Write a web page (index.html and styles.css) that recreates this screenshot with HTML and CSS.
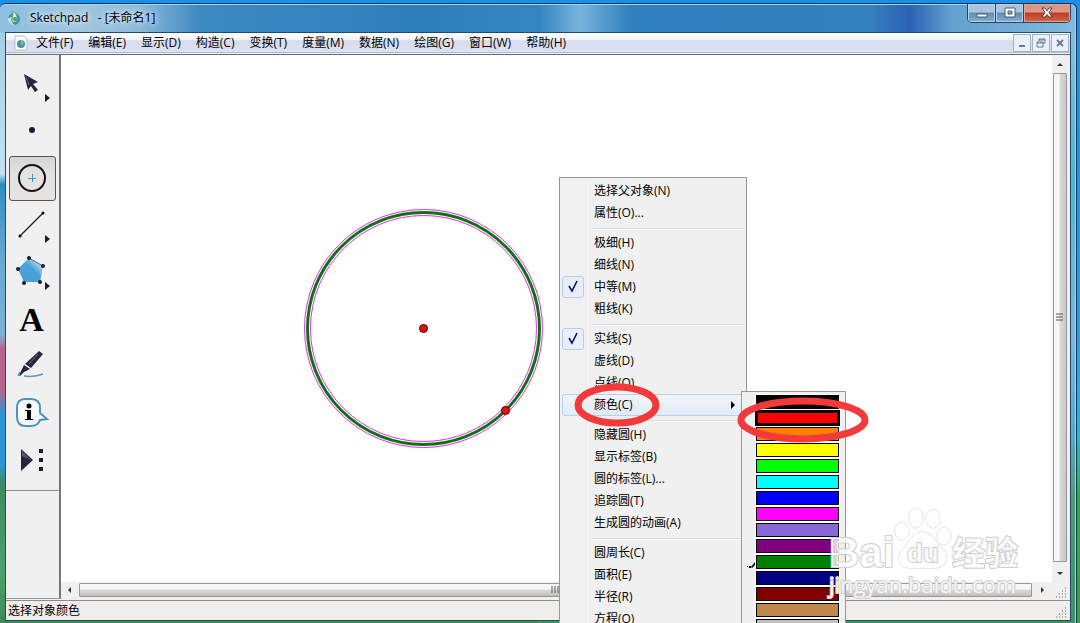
FILE: index.html
```html
<!DOCTYPE html>
<html lang="zh-CN">
<head>
  <meta charset="UTF-8">
  <title>Sketchpad - [未命名1]</title>
  <link rel="stylesheet" href="styles.css">
</head>
<body>
  <div class="window">
    <header class="titlebar">
      <svg class="app-icon" width="16" height="16" viewBox="0 0 16 16">
        <circle cx="8" cy="9" r="6" fill="#3d93b5"/>
        <path d="M2 8a6 6 0 0 0 7 7c-3-1-4-4-3-8z" fill="#b9dfe2"/>
        <path d="M6 1c4 2 6 5 5 9-1 3-5 3-5 0s2-5 0-9z" fill="#e5ecc0" stroke="#5c9a80"/>
        <circle cx="9" cy="9" r="2" fill="#4c9b6d"/>
      </svg>
      <h1>Sketchpad&nbsp;&nbsp; - [未命名1]</h1>
      <div class="win-buttons">
        <button aria-label="最小化"><svg width="12" height="12"><path d="M1 7h10v3H1z" fill="#fff" stroke="#4d5b6b"/></svg></button>
        <button aria-label="最大化"><svg width="12" height="12"><path d="M1 1h10v9H1zM4 4v3h4V4z" fill="#fff" fill-rule="evenodd" stroke="#4d5b6b"/></svg></button>
        <button class="win-close" aria-label="关闭"><svg width="12" height="12"><path d="M1 1h3l2 3 2-3h3L8 5.500l3 4.500H8L6 7.500 4 10H1l3-4.500z" fill="#fff" stroke="#5f3b3b"/></svg></button>
      </div>
    </header>

    <div class="client">
      <nav class="menubar">
        <svg class="doc-icon" width="14" height="16" viewBox="0 0 14 16">
          <path d="M1 1h9l3 3v11H1z" fill="#fff" stroke="#b9bfc9"/>
          <circle cx="7" cy="9" r="4" fill="#3d93b5"/>
          <path d="M7 4c3 2 3 4 2 6-2 1-3-1-2-6z" fill="#8abd74"/>
        </svg>
        <button>文件(F)</button>
        <button>编辑(E)</button>
        <button>显示(D)</button>
        <button>构造(C)</button>
        <button>变换(T)</button>
        <button>度量(M)</button>
        <button>数据(N)</button>
        <button>绘图(G)</button>
        <button>窗口(W)</button>
        <button>帮助(H)</button>
        <div class="mdi-buttons">
          <button aria-label="最小化文档"><svg width="10" height="10"><path d="M2 7h6v2H2z" fill="#667c91"/></svg></button>
          <button aria-label="还原文档"><svg width="10" height="10"><path d="M3 3V1h6v4H7M3 2h6M1 4h6v5H1zM1 5h6" fill="none" stroke="#667c91"/></svg></button>
          <button aria-label="关闭文档"><svg width="10" height="10"><path d="M2 2l6 6M8 2L2 8" stroke="#667c91" stroke-width="2"/></svg></button>
        </div>
      </nav>

      <div class="work">
        <aside class="toolbox">
          <button aria-label="移动箭头工具">
            <svg width="46" height="45"><path d="M15 12l14 8-5 2 5 6-3 2-4-6-3 4z" fill="#272244"/><path d="M17 15l3 8" stroke="#6d6986"/><path class="more" d="M36 32l5 4-5 4z"/></svg>
          </button>
          <button aria-label="点工具">
            <svg width="46" height="45"><circle cx="23" cy="21" r="3" fill="#1e1a38"/></svg>
          </button>
          <button class="active" aria-label="圆工具">
            <svg width="46" height="45"><circle cx="23" cy="22" r="13" fill="none" stroke="#111" stroke-width="2"/><path d="M23.500 18v8M19 22.500h8" stroke="#3f97c9"/></svg>
          </button>
          <button aria-label="线段工具">
            <svg width="46" height="45"><path d="M11 33l23-23" stroke="#222" stroke-width="1.200"/><circle cx="11" cy="33" r="1.500"/><circle cx="34" cy="10" r="1.500"/><path class="more" d="M36 32l5 4-5 4z"/></svg>
          </button>
          <button aria-label="多边形工具">
            <svg width="46" height="45">
              <linearGradient id="glass" x1="0" y1="1" x2="1" y2="0">
                <stop offset="0.55" stop-color="#48a1d8"/>
                <stop offset="0.8" stop-color="#a5d2ee"/>
              </linearGradient>
              <path d="M20 8l14 8-3 16H15L9 19z" fill="url(#glass)"/><path d="M20 8l14 8" stroke="#4f6175"/><g fill="#1e1a38"><circle cx="20" cy="8" r="2"/><circle cx="34" cy="16" r="2"/><circle cx="31" cy="32" r="2"/><circle cx="15" cy="33" r="2"/><circle cx="9" cy="19" r="2"/></g><path class="more" d="M36 32l5 4-5 4z"/>
            </svg>
          </button>
          <button class="text-tool" aria-label="文本工具">A</button>
          <button aria-label="标记工具">
            <svg width="46" height="45"><path d="M30 7l4 3-12 14-6-4z" fill="#292541"/><path d="M29 10l-9 10" stroke="#77748b"/><path d="M15 21l6 4-6 3-4 4-1-1z" fill="#292541"/><path d="M9 32l2-4M15 32c7 1 14 0 19-2" fill="none" stroke="#559eaf" stroke-width="1.500"/></svg>
          </button>
          <button aria-label="信息工具">
            <svg width="46" height="45"><path d="M16 8h6q9 0 9 9v5l7 6-7 1q-2 6-9 6h-5q-9 0-9-9v-9q0-9 8-9z" fill="#f8fbfc" stroke="#4c93bf" stroke-width="2"/><circle cx="20" cy="15" r="2.500"/><path d="M16 19h6v9h2v1h-8v-1h2v-8h-2z"/></svg>
          </button>
          <button aria-label="自定义工具">
            <svg width="46" height="45"><path d="M12 11l12 11-12 11z" fill="#27213e"/><path d="M13 13l9 9-9-4z" fill="#5b576d"/><path d="M30 11h4v4h-4zM30 20h4v4h-4zM30 29h4v4h-4z" fill="#1e1a38"/></svg>
          </button>
          <hr>
        </aside>

        <main class="sheet">
          <svg class="drawing">
            <g fill="none">
              <circle cx="362.500" cy="273.500" r="119" stroke="#dc32dc"/>
              <circle cx="362.500" cy="273.500" r="113" stroke="#dc32dc"/>
              <circle cx="362.500" cy="273.500" r="116" stroke="#107018" stroke-width="3"/>
            </g>
            <g fill="#e8100c" stroke="#400">
              <circle cx="362.500" cy="273.500" r="4"/>
              <circle cx="444.500" cy="355.500" r="4"/>
            </g>
          </svg>
        </main>

        <div class="scroll scroll-y">
          <svg width="16" height="18"><path d="M5 11l3-3 3 3z"/></svg>
          <div class="thumb"><svg width="8" height="9"><path d="M0 1h7M0 4h7M0 7h7" stroke="#555"/></svg></div>
          <svg width="16" height="20"><path d="M5 10l3 3 3-3z"/></svg>
        </div>
        <div class="scroll scroll-x">
          <svg width="18" height="16"><path d="M10 5L7 8l3 3z"/></svg>
          <div class="thumb"><svg width="9" height="8"><path d="M1 0v7M4 0v7M7 0v7" stroke="#555"/></svg></div>
          <svg width="20" height="16"><path d="M9 5l3 3-3 3z"/></svg>
        </div>
        <svg class="grip" width="12" height="12"><path d="M9 2h1M6 5h1m2 0h1M3 8h1m2 0h1m2 0h1M0 11h1m2 0h1m2 0h1m2 0h1" stroke="#aaa" stroke-width="2"/></svg>
      </div>

      <footer class="statusbar">
        <span>选择对象颜色</span>
        <svg class="grip" width="12" height="12"><path d="M9 2h1M6 5h1m2 0h1M3 8h1m2 0h1m2 0h1M0 11h1m2 0h1m2 0h1m2 0h1" stroke="#aaa" stroke-width="2"/></svg>
      </footer>
    </div>
  </div>

  <!-- right-click menu of the circle -->
  <div class="popup context-menu">
    <button>选择父对象(N)</button>
    <button>属性(O)...</button>
    <hr>
    <button>极细(H)</button>
    <button>细线(N)</button>
    <button><svg class="tick" width="22" height="22"><path d="M6 9l3 5 5-10" fill="none" stroke="#14146e" stroke-width="1.600"/></svg>中等(M)</button>
    <button>粗线(K)</button>
    <hr>
    <button><svg class="tick" width="22" height="22"><path d="M6 9l3 5 5-10" fill="none" stroke="#14146e" stroke-width="1.600"/></svg>实线(S)</button>
    <button>虚线(D)</button>
    <button>点线(O)</button>
    <button class="hover">颜色(C)<svg class="arrow" width="6" height="8"><path d="M1 0l4 4-4 4z"/></svg></button>
    <hr>
    <button>隐藏圆(H)</button>
    <button>显示标签(B)</button>
    <button>圆的标签(L)...</button>
    <button>追踪圆(T)</button>
    <button>生成圆的动画(A)</button>
    <hr>
    <button>圆周长(C)</button>
    <button>面积(E)</button>
    <button>半径(R)</button>
    <button>方程(Q)</button>
  </div>

  <div class="popup color-menu">
    <button class="black" aria-label="黑色"></button>
    <button class="red selected" aria-label="红色"></button>
    <button class="orange" aria-label="橙色"></button>
    <button class="yellow" aria-label="黄色"></button>
    <button class="lime" aria-label="绿色"></button>
    <button class="cyan" aria-label="青色"></button>
    <button class="blue" aria-label="蓝色"></button>
    <button class="magenta" aria-label="洋红"></button>
    <button class="violet" aria-label="紫罗兰"></button>
    <button class="purple" aria-label="紫色"></button>
    <button class="green" aria-label="深绿"><svg class="mark" width="9" height="6"><path d="M0 4h1v1H0zM2 4h2v2H2zM4 5l4-5v3L5 6z"/></svg></button>
    <button class="navy" aria-label="深蓝"></button>
    <button class="maroon" aria-label="深红"></button>
    <button class="tan" aria-label="棕色"></button>
    <button class="silver" aria-label="银色"></button>
  </div>

  <svg class="watermark" width="200" height="100">
    <g>
      <ellipse cx="24" cy="37" rx="7" ry="9"/>
      <ellipse cx="38" cy="24" rx="7" ry="10"/>
      <ellipse cx="55" cy="25" rx="7" ry="9"/>
      <ellipse cx="66" cy="42" rx="7" ry="9"/>
      <path d="M45 38c10 0 12 10 18 15 10 9 6 21-5 21-6 0-20 0-26 0-12 0-15-11-6-21 6-6 9-15 19-15z"/>
    </g>
    <text class="wm-logo" x="-49" y="73">Bai</text>
    <text class="wm-du" x="29" y="68">du</text>
    <text class="wm-cjk" x="74" y="71">经验</text>
    <text class="wm-url" x="-49" y="99">jingyan.baidu.com</text>
  </svg>

  <!-- red marker rings -->
  <svg class="rings">
    <ellipse cx="617" cy="405" rx="39" ry="18"/>
    <ellipse cx="803" cy="420" rx="62" ry="19"/>
  </svg>
</body>
</html>
```
FILE: styles.css
```css
* {
  box-sizing: border-box;
}
body {
  margin: 0;
  height: 100vh;
  overflow: hidden;
  position: relative;
  display: flex;
  flex-direction: column;
  padding: 3px 3px 0 0;
  font: 12px/16px "Open Sans", "Noto Sans CJK SC", sans-serif;
  color: #000;
  background: linear-gradient(#1b8fe6 0%, #2a9be8 50%, #2db6cf 70%, #2fae38 80%, #35a53c 100%);
}
button {
  font: inherit;
  color: inherit;
  border: 0;
  padding: 0;
  background: none;
}
svg {
  display: block;
  flex: none;
}

/* window frame */
.window {
  flex: 1;
  min-height: 0;
  display: flex;
  flex-direction: column;
  padding: 0 5px 2px;
  border: 1px solid #12385e;
  border-width: 1px 1px 0 0;
  border-radius: 6px 6px 0 0;
  box-shadow: inset 0 1px #a9d4ee, inset -1px 0 #a5d5ea;
  background:
    linear-gradient(90deg, #8dbfe0 0, #a0c6df 80px, #8cb9d9 140px, #3e88c0 200px, #2f7fbd 420px, #3585c3 540px, #77b4dc 580px, #3180bf 630px, #3580bf 870px, #2b62b4 910px, #61a0d0 950px, #85b9dc 100%) 0 0 / 100% 29px no-repeat,
    linear-gradient(#9fcbe4 0, #c4e1ee 170px, #2e8dc4 180px, #66a7cf 250px, #7ab3dc 330px, #b5658d 345px, #b5658d 385px, #2c93d6 410px, #2c93d6 460px, #3f8a61 480px, #4fa06c 570px, #3c8955 100%) 0 0 / 50% 100% no-repeat,
    linear-gradient(#8fc0dd 0, #4eb6d6 180px, #7db8dc 330px, #5aa9d3 420px, #4f9f76 490px, #3e9460 100%) 100% 0 / 50% 100% no-repeat;
}
.titlebar {
  height: 28px;
  display: flex;
  align-items: flex-start;
}
.app-icon {
  margin: 6px 8px 0 1px;
}
h1 {
  margin: 6px auto 0 0;
  font-size: 12px;
  font-weight: 400;
  text-shadow: 0 0 6px #e3f1fa, 0 0 6px #e3f1fa;
}
.win-buttons {
  display: flex;
  height: 19px;
  border: 1px solid #26425e;
  border-top: 0;
  border-radius: 0 0 5px 5px;
  overflow: hidden;
}
.win-buttons button {
  width: 28px;
  display: grid;
  place-items: center;
  border-right: 1px solid #26425e;
  box-shadow: inset 0 0 0 1px #b8d2e6;
  background: linear-gradient(#a8c5dd 45%, #5a8cb5 50%, #84b3d4);
}
.win-buttons .win-close {
  width: 46px;
  border: 0;
  box-shadow: inset 0 0 0 1px #dfa495;
  background: linear-gradient(#dd9584 45%, #bd3c24 50%, #d0684c);
}

.client {
  flex: 1;
  min-height: 0;
  display: flex;
  flex-direction: column;
  border: 1px solid #23496b;
  background: #f0f0f0;
}
.menubar {
  height: 22px;
  display: flex;
  align-items: center;
  gap: 15px;
  padding: 0 1px 2px 8px;
  border-bottom: 1px solid #6b6b75;
  box-shadow: inset 0 -1px #f0f0f0, inset 0 -2px #b6bccc;
  background: linear-gradient(#fff, #eef1f9 35%, #d5dbee 36%, #dfe3f3);
}
.menubar > button {
  white-space: nowrap;
}
.doc-icon {
  margin-right: -7px;
}
.mdi-buttons {
  display: flex;
  gap: 1px;
  margin-left: auto;
}
.mdi-buttons button {
  width: 18px;
  height: 18px;
  display: grid;
  place-items: center;
  border: 1px solid #a3b3c4;
  background: #eaf0f8;
}

/* toolbox, sheet and scrollbars */
.work {
  flex: 1;
  min-height: 0;
  display: grid;
  grid-template-columns: 55px 1fr 18px;
  grid-template-rows: 1fr 18px;
}
.toolbox {
  grid-row: 1 / 3;
  min-height: 0;
  padding: 7px 3px 0;
  margin-bottom: 1px;
  border-right: 2px solid #77777b;
  border-bottom: 1px solid #99999b;
}
.toolbox button {
  display: block;
  width: 47px;
  height: 45px;
  margin-bottom: 2px;
}
.toolbox .active {
  border: 1px solid #55555a;
  border-radius: 3px;
  background: linear-gradient(#d5d5d5, #e4e3e2 40%);
}
.toolbox .active svg {
  margin: -1px;
}
.toolbox .text-tool {
  font: bold 34px/44px "Liberation Serif", serif;
  padding-right: 2px;
}
.toolbox hr {
  margin: 7px -3px 0;
  border: 0;
  border-top: 1px solid #8d8d90;
}
.more {
  fill: #1e1a38;
}
.sheet {
  background: #fff;
  overflow: hidden;
}
.drawing {
  width: 100%;
  height: 100%;
}
.scroll {
  display: flex;
  background: #f0f0f0;
  fill: #333;
}
.scroll-y {
  flex-direction: column;
  padding-right: 2px;
}
.scroll-x {
  padding-bottom: 2px;
}
.thumb {
  flex: 1;
  display: grid;
  place-items: center;
  border: 1px solid #98989b;
  border-radius: 1px;
}
.scroll-y .thumb {
  margin: 0 1px;
  background: linear-gradient(90deg, #f6f6f6 40%, #d8d8da 55%, #c8c8ca);
}
.scroll-x .thumb {
  margin: 1px 0;
  background: linear-gradient(#f6f6f6 40%, #d8d8da 55%, #bfbfc1);
}
.grip {
  align-self: end;
  justify-self: end;
  margin: 0 2px 2px 0;
}
.statusbar {
  height: 20px;
  display: flex;
  align-items: center;
  justify-content: space-between;
  padding: 1px 0 0 2px;
  border-top: 1px solid #8c8c8c;
  background: #f1edec;
}

/* popups */
.popup {
  position: absolute;
  border: 1px solid #979797;
  background: #f0f0f0;
}
.context-menu {
  left: 559px;
  top: 177px;
  width: 188px;
  padding: 2px;
  background: linear-gradient(90deg, #f1f1f1 26px, #e9e9e9 26px, #e9e9e9 27px, #f7f7f7 27px, #f7f7f7 28px, #f0f0f0 28px);
}
.context-menu button {
  display: flex;
  align-items: center;
  width: 100%;
  height: 22px;
  padding-left: 32px;
  position: relative;
}
.context-menu hr {
  height: 2px;
  margin: 4px 0 2px 30px;
  border: 0;
  border-top: 1px solid #dcdcdc;
  background: #fff;
}
.context-menu .hover {
  border: 1px solid #b4d1f0;
  border-radius: 3px;
  padding-left: 31px;
  background: linear-gradient(#f0f4f9, #e2ebf5);
}
.tick {
  position: absolute;
  left: 0;
  top: 0;
  border: 1px solid #b4cdea;
  border-radius: 3px;
  background: #e9eff8;
}
.arrow {
  margin: 0 7px 0 auto;
}
.color-menu {
  left: 741px;
  top: 391px;
  width: 105px;
  padding: 3px 6px 3px 14px;
}
.color-menu button {
  display: block;
  width: 83px;
  height: 14px;
  margin-bottom: 2px;
  border: 1px solid #000;
  outline: 1px solid #fff;
  position: relative;
}
.color-menu .selected {
  border-width: 2px;
  outline-color: #000;
}
.mark {
  position: absolute;
  left: -10px;
  top: 6px;
}
.black { background: #000; }
.red { background: #f00; }
.orange { background: #ff8000; }
.yellow { background: #ff0; }
.lime { background: #0f0; }
.cyan { background: #0ff; }
.blue { background: #00f; }
.magenta { background: #f0f; }
.violet { background: #8b68d8; }
.purple { background: #800080; }
.green { background: #008000; }
.navy { background: #000080; }
.maroon { background: #800000; }
.tan { background: #c0864c; }
.silver { background: #c0c0c0; }

/* overlays */
.watermark {
  position: absolute;
  left: 878px;
  top: 494px;
  overflow: visible;
  pointer-events: none;
  fill: rgba(255, 255, 255, 0.8);
  stroke: #d0d0d0;
  paint-order: stroke;
}
.wm-logo {
  font: bold 42px "Liberation Sans", sans-serif;
  stroke-width: 2px;
}
.wm-du {
  font: bold 26px "Liberation Sans", sans-serif;
  stroke-width: 2px;
}
.wm-cjk {
  font: bold 33px "Noto Sans CJK SC", sans-serif;
  stroke-width: 2px;
}
.wm-url {
  font: 22px "Open Sans", sans-serif;
  stroke-width: 2px;
}
.rings {
  position: absolute;
  left: 0;
  top: 0;
  width: 100%;
  height: 100%;
  pointer-events: none;
  fill: none;
  stroke: #f23a3a;
  stroke-width: 7px;
}
```
